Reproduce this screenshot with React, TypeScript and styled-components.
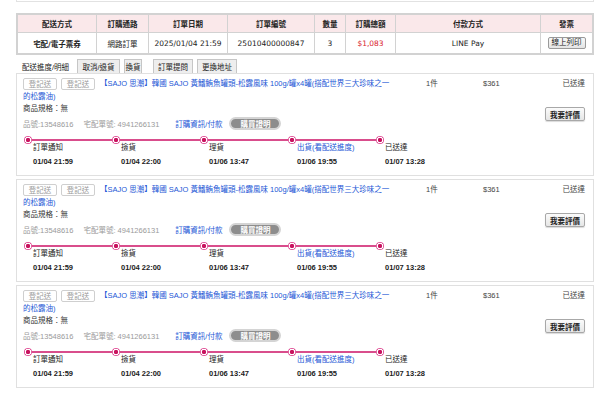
import styled, { createGlobalStyle } from 'styled-components';

const GlobalStyle = createGlobalStyle`
  body {
    margin: 0;
    background: #fff;
    font-family: "Liberation Sans", "Noto Sans CJK TC", sans-serif;
    font-size: 7.5px;
    color: #222;
  }
`;

const Page = styled.div`
  width: 578px;
  padding-left: 16px;
`;

const PrevBox = styled.div`
  height: 1px;
  border: 1px solid #e2e2e2;
  border-top: none;
  margin-bottom: 11px;
`;

const OrderTable = styled.div`
  box-sizing: border-box;
  width: 578px;
  display: grid;
  grid-template-columns: 79px 52px 79px 87px 31px 50px 145px 1fr;
  border: 2px solid #d2d2d2;
  font-family: "DejaVu Sans", "Noto Sans CJK TC", sans-serif;
  font-size: 7.5px;
`;

const HeadCell = styled.div<{ $last?: boolean }>`
  box-sizing: border-box;
  height: 18px;
  display: flex;
  align-items: center;
  justify-content: center;
  background: #fae8ea;
  border-bottom: 1px solid #d2d2d2;
  border-right: ${(p) => (p.$last ? 'none' : '1px solid #d2d2d2')};
  font-weight: bold;
  color: #222;
`;

const Cell = styled.div<{ $bold?: boolean; $red?: boolean; $last?: boolean }>`
  box-sizing: border-box;
  height: 20px;
  display: flex;
  align-items: center;
  justify-content: center;
  border-right: ${(p) => (p.$last ? 'none' : '1px solid #d2d2d2')};
  font-weight: ${(p) => (p.$bold ? 'bold' : 'normal')};
  color: ${(p) => (p.$red ? '#d9232e' : '#222')};
`;

const PrintButton = styled.span`
  display: inline-block;
  padding: 1px 3px;
  border: 1px solid #9a9a9a;
  border-radius: 2px;
  background: linear-gradient(#f8f8f8, #e4e4e4);
  font-family: "Liberation Sans", "Noto Sans CJK TC", sans-serif;
  line-height: 8px;
  color: #222;
`;

const TabBar = styled.div`
  display: flex;
  margin-top: 4px;
`;

const Tab = styled.div<{ $w: number; $gap: number; $active?: boolean }>`
  box-sizing: border-box;
  width: ${(p) => p.$w}px;
  height: 14px;
  margin-left: ${(p) => p.$gap}px;
  display: flex;
  align-items: center;
  justify-content: center;
  background: ${(p) => (p.$active ? '#fff' : '#eee')};
  border: 1px solid ${(p) => (p.$active ? 'transparent' : '#c6c6c6')};
  border-bottom: none;
  color: #222;
`;

const Card = styled.div`
  box-sizing: border-box;
  width: 578px;
  border: 1px solid #e0e0e0;
  padding: 3px 8px 7px 6px;
  margin-bottom: 3px;
`;

const ItemTop = styled.div`
  display: flex;
`;

const Main = styled.div`
  width: 370px;
`;

const Title = styled.div`
  line-height: 13px;
  color: #2457d6;
`;

const RegButton = styled.span<{ $gap: number }>`
  display: inline-block;
  box-sizing: border-box;
  width: 34px;
  height: 12px;
  padding-top: 1px;
  margin-right: ${(p) => p.$gap}px;
  border: 1px solid #cfcfcf;
  border-radius: 2px;
  vertical-align: middle;
  text-align: center;
  line-height: 9px;
  color: #9a9a9a;
`;

const Spec = styled.div`
  line-height: 12px;
  color: #333;
`;

const Meta = styled.div`
  display: flex;
  align-items: center;
  height: 12px;
  margin-top: 2px;
`;

const Muted = styled.span<{ $gap: number }>`
  color: #9a9a9a;
  margin-right: ${(p) => p.$gap}px;
`;

const InfoLink = styled.span`
  color: #2457d6;
  margin-right: 7px;
`;

const Pill = styled.span`
  box-sizing: border-box;
  width: 52px;
  height: 13px;
  display: flex;
  align-items: center;
  justify-content: center;
  border: 2px solid #d4d4d4;
  border-radius: 7px;
  background: #8d8d8d;
  color: #fff;
  font-weight: bold;
`;

const Side = styled.div`
  flex: 1;
  margin-left: 33px;
`;

const SideRow = styled.div`
  display: flex;
  line-height: 13px;
  color: #444;
`;

const Qty = styled.span`
  width: 57px;
`;

const Price = styled.span`
  flex: 1;
`;

const ReviewRow = styled.div`
  display: flex;
  justify-content: flex-end;
  margin-top: 17px;
`;

const ReviewButton = styled.span`
  box-sizing: border-box;
  width: 40px;
  height: 14px;
  display: flex;
  align-items: center;
  justify-content: center;
  border: 1px solid #a8a8a8;
  border-radius: 2px;
  background: linear-gradient(#fbfbfb, #e6e6e6);
  box-shadow: 0 1px 1px rgba(0, 0, 0, 0.15);
  font-weight: bold;
  color: #222;
`;

const Timeline = styled.div`
  display: flex;
  margin-top: 7px;
  margin-left: 1px;
`;

const Step = styled.div`
  width: 88px;
`;

const StepHead = styled.div`
  display: flex;
  align-items: center;
  height: 8px;
`;

const Dot = styled.span`
  width: 8px;
  height: 8px;
  flex: none;
  border-radius: 50%;
  background: radial-gradient(circle, #c8145f 0 2px, #fff 2.3px 3px, #e0569a 3.2px);
`;

const Track = styled.span`
  flex: 1;
  height: 2px;
  background: #d94d8c;
`;

const StepLabel = styled.div<{ $link?: boolean }>`
  padding-left: 9px;
  margin-top: -2px;
  line-height: 12px;
  white-space: nowrap;
  color: ${(p) => (p.$link ? '#2457d6' : '#222')};
`;

const StepDate = styled.div`
  padding-left: 9px;
  margin-top: 2px;
  line-height: 12px;
  font-weight: bold;
  white-space: nowrap;
  color: #222;
`;

const headers = ['配送方式', '訂購通路', '訂單日期', '訂單編號', '數量', '訂購總額', '付款方式', '發票'];

const tabs = [
  { label: '配送進度/明細', w: 59, gap: 0, active: true },
  { label: '取消/退貨', w: 43, gap: 2 },
  { label: '換貨', w: 18, gap: 4 },
  { label: '訂單提問', w: 40, gap: 11 },
  { label: '更換地址', w: 40, gap: 4 },
];

const steps = [
  { label: '訂單通知', date: '01/04 21:59' },
  { label: '撿貨', date: '01/04 22:00' },
  { label: '理貨', date: '01/06 13:47' },
  { label: '出貨(看配送進度)', date: '01/06 19:55', link: true },
  { label: '已送達', date: '01/07 13:28' },
];

function ItemCard() {
  return (
    <Card>
      <ItemTop>
        <Main>
          <Title>
            <RegButton $gap={4}>登記送</RegButton>
            <RegButton $gap={5}>登記送</RegButton>
            【SAJO 思潮】韓國 SAJO 黃鰭鮪魚罐頭-松露風味 100g/罐x4罐(搭配世界三大珍味之一的松露油)
          </Title>
          <Spec>商品規格：無</Spec>
          <Meta>
            <Muted $gap={10}>品號:13548616</Muted>
            <Muted $gap={16}>宅配單號: 4941266131</Muted>
            <InfoLink>訂購資訊/付款</InfoLink>
            <Pill>購買證明</Pill>
          </Meta>
        </Main>
        <Side>
          <SideRow>
            <Qty>1件</Qty>
            <Price>$361</Price>
            <span>已送達</span>
          </SideRow>
          <ReviewRow>
            <ReviewButton>我要評價</ReviewButton>
          </ReviewRow>
        </Side>
      </ItemTop>
      <Timeline>
        {steps.map((s, i) => (
          <Step key={s.label}>
            <StepHead>
              <Dot />
              {i < steps.length - 1 && <Track />}
            </StepHead>
            <StepLabel $link={s.link}>{s.label}</StepLabel>
            <StepDate>{s.date}</StepDate>
          </Step>
        ))}
      </Timeline>
    </Card>
  );
}

export default function App() {
  return (
    <>
      <GlobalStyle />
      <Page>
        <PrevBox />
        <OrderTable>
          {headers.map((h, i) => (
            <HeadCell key={h} $last={i === headers.length - 1}>
              {h}
            </HeadCell>
          ))}
          <Cell $bold>宅配/電子票券</Cell>
          <Cell>網路訂單</Cell>
          <Cell>2025/01/04 21:59</Cell>
          <Cell>25010400000847</Cell>
          <Cell>3</Cell>
          <Cell $red>$1,083</Cell>
          <Cell>LINE Pay</Cell>
          <Cell $last>
            <PrintButton>線上列印</PrintButton>
          </Cell>
        </OrderTable>
        <TabBar>
          {tabs.map((t) => (
            <Tab key={t.label} $w={t.w} $gap={t.gap} $active={t.active}>
              {t.label}
            </Tab>
          ))}
        </TabBar>
        <ItemCard />
        <ItemCard />
        <ItemCard />
      </Page>
    </>
  );
}
